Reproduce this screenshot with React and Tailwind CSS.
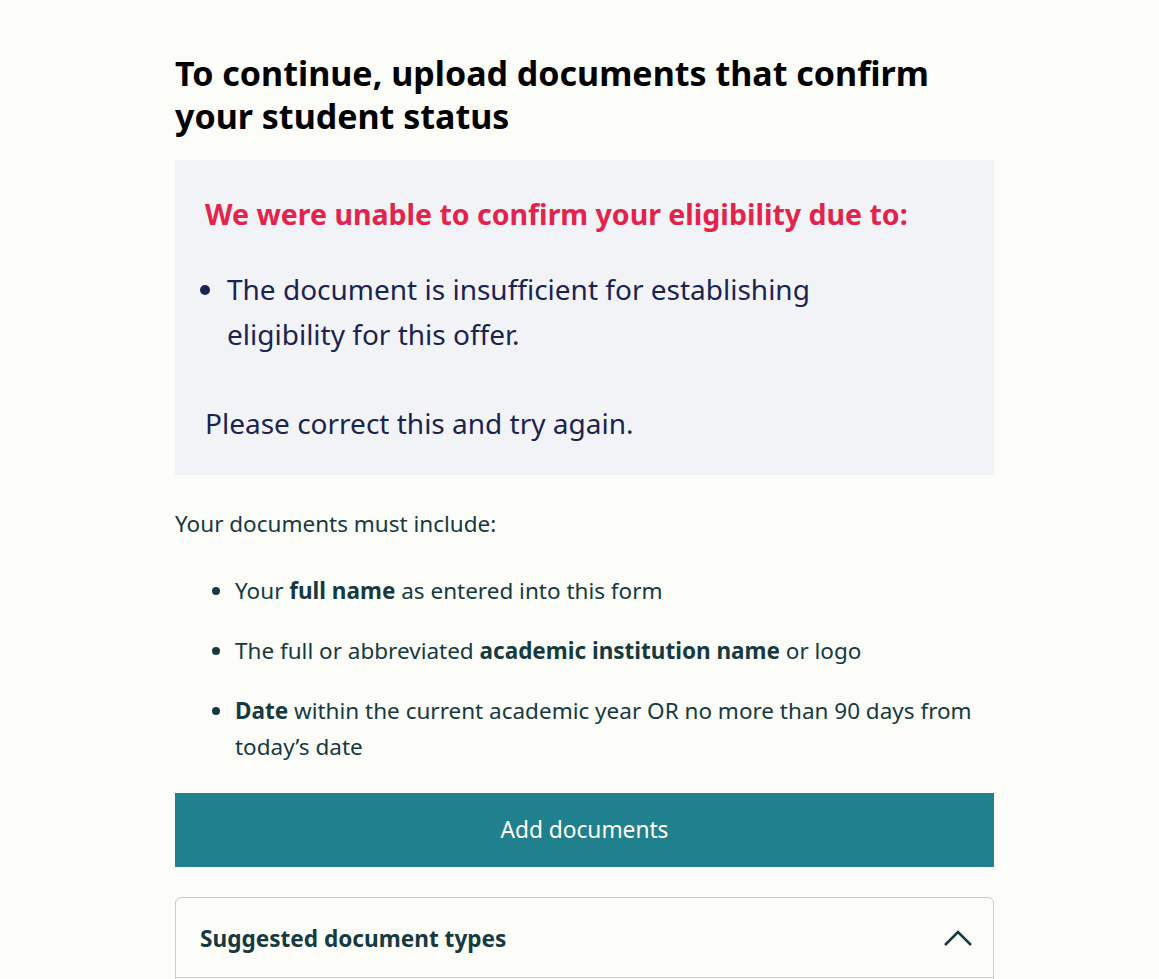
export default function App() {
  const font = { fontFamily: '"Noto Sans", "Open Sans", sans-serif' };
  return (
    <div className="min-h-screen bg-[#fcfcf9] text-[#163a40]" style={font}>
      <div className="w-[819px] ml-[175px] pt-[52px]">
        <h1 className="text-[34px] leading-[43px] font-bold text-black">
          To continue, upload documents that confirm your student status
        </h1>

        <div className="mt-[22px] bg-[#f2f3f7] px-[30px] pt-[36px] pb-[29px]">
          <h2 className="text-[28.5px] leading-[36px] font-bold text-[#e3234b]">
            We were unable to confirm your eligibility due to:
          </h2>
          <ul className="mt-[35px] list-disc pl-[22px] pr-[130px] text-[28px] leading-[45px] text-[#1b2451] marker:text-[#1b2451]">
            <li>The document is insufficient for establishing eligibility for this offer.</li>
          </ul>
          <p className="mt-[44px] text-[28px] leading-[45px] text-[#1b2451]">
            Please correct this and try again.
          </p>
        </div>

        <p className="mt-[34px] text-[22.5px] leading-[30px]">Your documents must include:</p>
        <ul className="mt-[34px] list-disc pl-[60px] text-[22.5px] leading-[36px] space-y-[24px]">
          <li>
            Your <b>full name</b> as entered into this form
          </li>
          <li>
            The full or abbreviated <b>academic institution name</b> or logo
          </li>
          <li>
            <b>Date</b> within the current academic year OR no more than 90 days from today’s date
          </li>
        </ul>

        <button className="mt-[28px] w-full h-[74px] bg-[#21808d] text-white text-[22.7px]">
          Add documents
        </button>

        <div className="mt-[30px] border border-[#c6cbd4] rounded-[6px] overflow-hidden">
          <div className="flex items-center justify-between h-[80px] pl-[24px] pr-[20px] border-b border-[#c6cbd4]">
            <span className="text-[22.6px] font-bold text-[#163a40] pt-[3px]">Suggested document types</span>
            <svg width="30" height="18" viewBox="0 0 30 18" fill="none" stroke="#163a40" strokeWidth="2.6">
              <path d="M2 16 L15 3 L28 16" />
            </svg>
          </div>
          <div className="h-[40px]" />
        </div>
      </div>
    </div>
  );
}
